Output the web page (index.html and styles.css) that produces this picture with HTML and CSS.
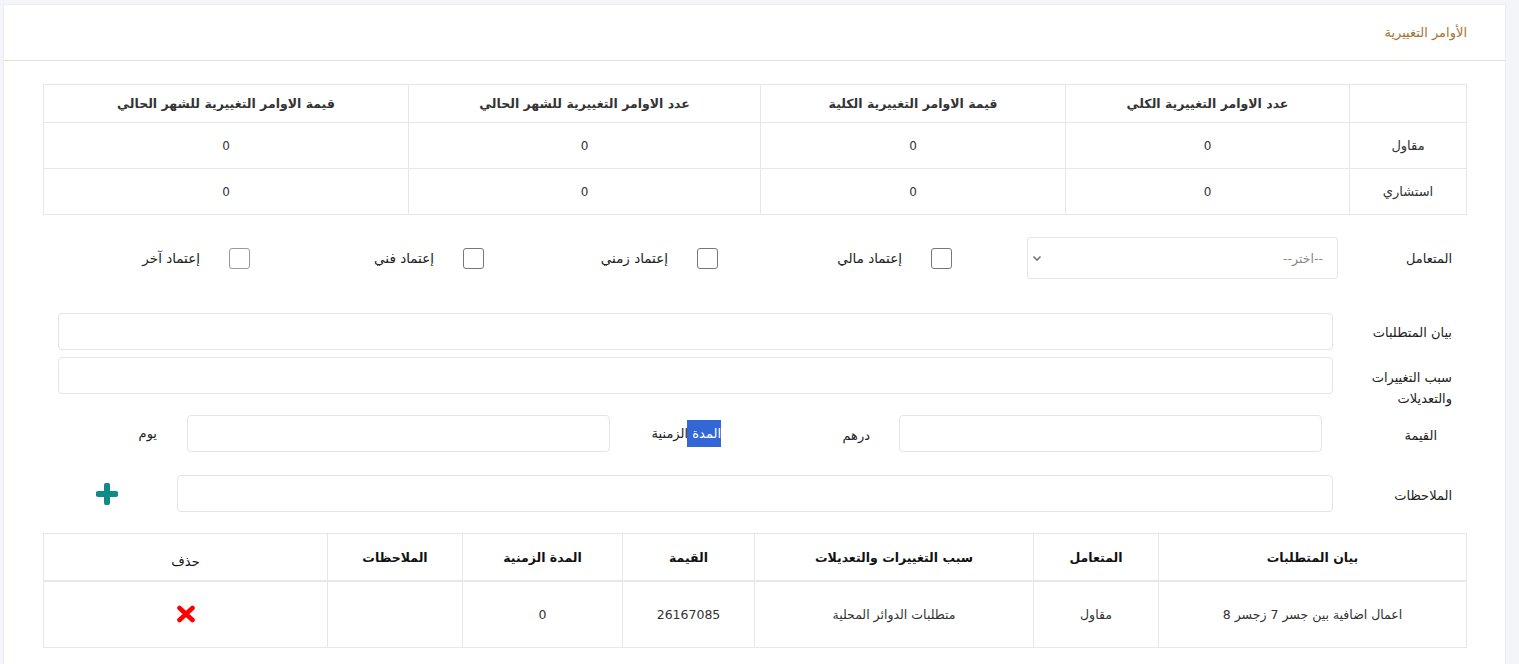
FILE: index.html
```html
<!DOCTYPE html>
<html lang="ar" dir="rtl">
<head>
<meta charset="utf-8">
<title>الأوامر التغييرية</title>
<link rel="stylesheet" href="styles.css">
</head>
<body>
<div class="card">
  <div class="card-header">الأوامر التغييرية</div>
  <div class="card-body">
    <table class="summary">
      <colgroup>
        <col style="width:117px"><col style="width:284px"><col style="width:305px"><col style="width:352px"><col>
      </colgroup>
      <thead>
        <tr>
          <th></th>
          <th>عدد الاوامر التغييرية الكلي</th>
          <th>قيمة الاوامر التغييرية الكلية</th>
          <th>عدد الاوامر التغييرية للشهر الحالي</th>
          <th>قيمة الاوامر التغييرية للشهر الحالي</th>
        </tr>
      </thead>
      <tbody>
        <tr><td class="rowlabel">مقاول</td><td>0</td><td>0</td><td>0</td><td>0</td></tr>
        <tr><td class="rowlabel">استشاري</td><td>0</td><td>0</td><td>0</td><td>0</td></tr>
      </tbody>
    </table>

    <div class="form-row row-party">
      <label class="lbl lbl-party">المتعامل</label>
      <div class="select">
        <span class="placeholder">--اختر--</span>
        <svg class="chev" width="10" height="7" viewBox="0 0 10 7"><path d="M1.5 1.5 L5 5 L8.5 1.5" fill="none" stroke="#777" stroke-width="1.6"/></svg>
      </div>
      <div class="checks">
        <div class="check"><span class="box"></span><span>إعتماد مالي</span></div>
        <div class="check"><span class="box"></span><span>إعتماد زمني</span></div>
        <div class="check"><span class="box"></span><span>إعتماد فني</span></div>
        <div class="check last"><span class="box light"></span><span>إعتماد آخر</span></div>
      </div>
    </div>

    <div class="form-row row-text">
      <label class="lbl">بيان المتطلبات</label>
      <div class="input wide"></div>
    </div>
    <div class="form-row row-text row-reason">
      <label class="lbl lbl-two">سبب التغييرات والتعديلات</label>
      <div class="input wide"></div>
    </div>

    <div class="form-row row-value">
      <label class="lbl lbl-value">القيمة</label>
      <div class="input half"></div>
      <span class="unit unit-aed">درهم</span>
      <span class="unit unit-dur"><span class="sel">المدة</span> الزمنية</span>
      <div class="input half"></div>
      <span class="unit unit-day">يوم</span>
    </div>

    <div class="form-row row-notes">
      <label class="lbl">الملاحظات</label>
      <div class="input notes"></div>
      <div class="plus">
        <svg width="22" height="22" viewBox="0 0 22 22"><path d="M11 2.5 V19.5 M2.5 11 H19.5" stroke="#0f8c87" stroke-width="6" stroke-linecap="round"/></svg>
      </div>
    </div>

    <table class="items">
      <colgroup>
        <col style="width:308px"><col style="width:125px"><col style="width:279px"><col style="width:132px"><col style="width:160px"><col style="width:135px"><col>
      </colgroup>
      <thead>
        <tr>
          <th>بيان المتطلبات</th>
          <th>المتعامل</th>
          <th>سبب التغييرات والتعديلات</th>
          <th>القيمة</th>
          <th>المدة الزمنية</th>
          <th>الملاحظات</th>
          <th class="del-h">حذف</th>
        </tr>
      </thead>
      <tbody>
        <tr>
          <td>اعمال اضافية بين جسر 7 زجسر 8</td>
          <td>مقاول</td>
          <td>متطلبات الدوائر المحلية</td>
          <td>26167085</td>
          <td>0</td>
          <td></td>
          <td><svg class="x" width="20" height="18" viewBox="0 0 20 18"><path d="M3.5 3 L16.5 15 M16.5 3 L3.5 15" stroke="#ff0000" stroke-width="4.6" stroke-linecap="round"/></svg></td>
        </tr>
      </tbody>
    </table>
  </div>
</div>
</body>
</html>
```
FILE: styles.css
```css
* { box-sizing: border-box; }
html, body { margin: 0; }
body {
  background: #f4f5f8;
  padding: 4px 13px 0 3px;
  font-family: "DejaVu Sans", "Noto Sans", sans-serif;
  font-size: 12px;
  color: #222;
}
.card {
  background: #fff;
  border: 1px solid #ebedf0;
  border-bottom: none;
  height: 660px;
}
.card-header {
  height: 56px;
  border-bottom: 1px solid #e6e0d2;
  color: #a8742f;
  font-size: 13px;
  display: flex;
  align-items: center;
  padding: 0 38px 0 0;
}
.card-body {
  padding: 23px 38px 0 39px;
}
table {
  width: 100%;
  border-collapse: collapse;
  table-layout: fixed;
}
.summary th, .summary td,
.items th, .items td {
  border: 1px solid #e7e7e7;
  text-align: center;
  font-weight: normal;
}
.summary th {
  height: 38px;
  font-weight: bold;
  font-size: 12.5px;
  color: #333;
  padding-bottom: 2px;
}
.summary td {
  height: 46px;
  font-size: 12px;
  color: #333;
}
.summary td.rowlabel { font-size: 13px; }

.form-row {
  display: flex;
  align-items: flex-start;
}
.form-row > * { flex-shrink: 0; }
.lbl {
  font-size: 13px;
  color: #222;
  padding-right: 15px;
}
.row-party {
  margin-top: 22px;
  height: 42px;
  align-items: center;
}
.lbl-party { width: 129px; }
.select {
  width: 311px;
  height: 42px;
  border: 1px solid #e4e4e4;
  border-radius: 3px;
  display: flex;
  align-items: center;
  justify-content: space-between;
  padding: 0 14px 0 4px;
}
.placeholder { color: #888; font-size: 12.5px; }
.checks {
  display: flex;
  margin-right: 75px;
}
.check {
  width: 234px;
  flex-shrink: 0;
  display: flex;
  align-items: center;
  gap: 29px;
  font-size: 13.5px;
}
.check.last { width: auto; }
.box {
  width: 21px;
  height: 21px;
  border: 1px solid #777;
  border-radius: 3px;
  flex: none;
}
.box.light { border-color: #999; }

.row-text { margin-top: 7px; }
.row-party + .row-text { margin-top: 34px; }
.row-text .lbl {
  width: 134px;
  padding-top: 12px;
}
.row-reason .lbl { padding-top: 10px; line-height: 21px; }
.lbl-two { padding-left: 10px; }
.input {
  height: 37px;
  border: 1px solid #e4e4e4;
  border-radius: 4px;
}
.input.wide { width: 1275px; }

.row-value {
  margin-top: 6px;
  height: 37px;
  align-items: center;
}
.lbl-value { width: 145px; padding-right: 30px; padding-top: 4px; }
.input.half { width: 423px; }
.unit { font-size: 13px; }
.unit-aed { margin-right: 29px; width: 149px; padding-top: 3px; }
.unit-dur { width: 111px; }
.sel { background: #3367d6; color: #fff; padding: 6px 0; box-shadow: -5px 0 0 #3367d6; }
.unit-day { margin-right: 30px; }

.row-notes {
  margin-top: 23px;
  height: 37px;
  align-items: center;
}
.row-notes .lbl { width: 134px; padding-top: 3px; }
.input.notes { width: 1156px; }
.plus {
  margin-right: 59px;
  width: 22px;
  height: 22px;
  display: flex;
}

.items { margin-top: 21px; }
.items th {
  height: 47px;
  font-weight: bold;
  font-size: 12.5px;
  color: #111;
  border-bottom: 2px solid #e7e7e7;
  padding-top: 2px;
}
.items th.del-h { font-weight: normal; font-size: 13px; padding-top: 10px; }
.items td {
  height: 67px;
  font-size: 12.5px;
  color: #333;
}
.x { display: inline-block; vertical-align: middle; }
```
